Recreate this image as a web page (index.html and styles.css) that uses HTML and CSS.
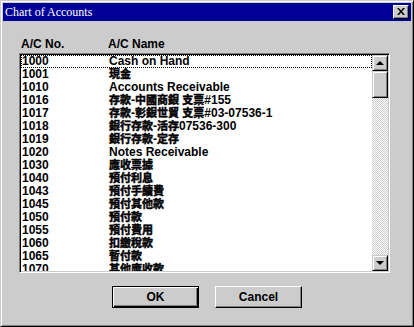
FILE: index.html
```html
<!DOCTYPE html>
<html lang="en">
<head>
  <meta charset="UTF-8" />
  <title>Chart of Accounts</title>
  <link rel="stylesheet" href="styles.css">
</head>
<body>
  <div class="window">
    <div class="titlebar">
      <span class="title">Chart of Accounts</span>
      <button class="close-btn" title="Close">
        <svg width="8" height="7" viewBox="0 0 8 7"><path d="M0 0h2l2 2.5 2-2.5h2l-3 3.5 3 3.5h-2l-2-2.5-2 2.5h-2l3-3.5z" fill="#000"/></svg>
      </button>
    </div>

    <div class="content">
      <div class="col-head">
        <span class="col-no">A/C No.</span>
        <span class="col-name">A/C Name</span>
      </div>

      <div class="listbox">
        <div class="rows" id="rows"></div>
        <div class="scrollbar">
          <div class="sb-btn"><span class="arrow up"></span></div>
          <div class="sb-thumb"></div>
          <div class="sb-track"></div>
          <div class="sb-btn"><span class="arrow down"></span></div>
        </div>
      </div>

      <div class="buttons">
        <button class="btn default">OK</button>
        <button class="btn">Cancel</button>
      </div>
    </div>
  </div>

  <script>
    const accounts = [
      ["1000", "Cash on Hand"],
      ["1001", "現金"],
      ["1010", "Accounts Receivable"],
      ["1016", "存款-中國商銀 支票#155"],
      ["1017", "存款-彰銀世貿 支票#03-07536-1"],
      ["1018", "銀行存款-活存07536-300"],
      ["1019", "銀行存款-定存"],
      ["1020", "Notes Receivable"],
      ["1030", "應收票據"],
      ["1040", "預付利息"],
      ["1043", "預付手續費"],
      ["1045", "預付其他款"],
      ["1050", "預付款"],
      ["1055", "預付費用"],
      ["1060", "扣繳稅款"],
      ["1065", "暫付款"],
      ["1070", "其他應收款"]
    ];

    const rows = document.getElementById("rows");

    // chinese runs get their own span so they can be drawn heavier
    function fillName(el, text) {
      const parts = text.split(/([\u3400-\u9fff]+)/);
      for (const p of parts) {
        if (!p) continue;
        if (/[\u3400-\u9fff]/.test(p)) {
          const s = document.createElement("span");
          s.className = "cjk";
          s.textContent = p;
          el.appendChild(s);
        } else {
          el.appendChild(document.createTextNode(p));
        }
      }
    }

    accounts.forEach(([no, name], i) => {
      const row = document.createElement("div");
      row.className = i === 0 ? "row focus" : "row";
      const a = document.createElement("span");
      a.className = "no";
      a.textContent = no;
      const b = document.createElement("span");
      b.className = "name";
      fillName(b, name);
      row.appendChild(a);
      row.appendChild(b);
      rows.appendChild(row);
    });
  </script>
</body>
</html>
```

FILE: styles.css
```css
* {
  box-sizing: border-box;
  margin: 0;
  padding: 0;
}

body {
  width: 414px;
  height: 327px;
  overflow: hidden;
  background: #cccccc;
  font-family: "Liberation Sans", Arial, "Noto Sans CJK TC", sans-serif;
  font-size: 12px;
  font-weight: bold;
  color: #000;
}

.window {
  width: 414px;
  height: 327px;
  background: #cccccc;
  border-top: 1px solid #cccccc;
  border-left: 1px solid #cccccc;
  border-right: 1px solid #000;
  border-bottom: 1px solid #000;
  box-shadow: inset 1px 1px 0 #fff, inset -1px -1px 0 #808080;
  padding: 2px;
  display: flex;
  flex-direction: column;
}

.titlebar {
  height: 18px;
  background: #000099;
  display: flex;
  align-items: center;
  justify-content: space-between;
  padding: 0 2px 0 2px;
}

.title {
  font-family: "Liberation Serif", "Times New Roman", serif;
  font-weight: normal;
  font-size: 12px;
  color: #fff;
  line-height: 18px;
}

.close-btn {
  width: 16px;
  height: 14px;
  background: #cccccc;
  border-top: 1px solid #fff;
  border-left: 1px solid #fff;
  border-right: 1px solid #000;
  border-bottom: 1px solid #000;
  box-shadow: inset -1px -1px 0 #808080;
  display: flex;
  align-items: center;
  justify-content: center;
  padding: 0 1px 1px 0;
}

.content {
  flex: 1;
  padding: 16px 0 0 16px;
}

.col-head {
  display: flex;
  line-height: 14px;
  padding-left: 2px;
}

.col-no {
  width: 87px;
}

.listbox {
  margin-top: 2px;
  width: 371px;
  height: 220px;
  background: #fff;
  border-top: 1px solid #808080;
  border-left: 1px solid #808080;
  border-right: 1px solid #fff;
  border-bottom: 1px solid #fff;
  box-shadow: inset 1px 1px 0 #000, inset -1px -1px 0 #cccccc;
  padding: 1px 1px 1px 1px;
  display: flex;
}

.rows {
  flex: 1;
  overflow: hidden;
}

.row {
  display: flex;
  height: 13px;
  line-height: 13px;
  padding-left: 1px;
  white-space: nowrap;
}

.row.focus {
  outline: 1px dotted #000;
  outline-offset: -1px;
}

.row .no {
  width: 87px;
  flex: none;
}

.name {
  height: 13px;
}

.cjk {
  font-family: "Noto Sans CJK TC", sans-serif;
  font-size: 11px;
  line-height: 0;
  -webkit-text-stroke: 0.45px #000;
}

.scrollbar {
  width: 16px;
  display: flex;
  flex-direction: column;
}

.sb-btn,
.sb-thumb {
  background: #cccccc;
  border-top: 1px solid #cccccc;
  border-left: 1px solid #cccccc;
  border-right: 1px solid #000;
  border-bottom: 1px solid #000;
  box-shadow: inset 1px 1px 0 #fff, inset -1px -1px 0 #808080;
}

.sb-btn {
  height: 16px;
  display: flex;
  align-items: center;
  justify-content: center;
}

.sb-thumb {
  height: 27px;
}

.sb-track {
  flex: 1;
  background: repeating-conic-gradient(#fff 0 25%, #cccccc 0 50%) 0 0 / 2px 2px;
}

.arrow {
  width: 0;
  height: 0;
  border-left: 4px solid transparent;
  border-right: 4px solid transparent;
}

.arrow.up {
  border-bottom: 4px solid #000;
}

.arrow.down {
  border-top: 4px solid #000;
}

.buttons {
  display: flex;
  justify-content: center;
  gap: 16px;
  margin-top: 13px;
  margin-left: -16px;
}

.btn {
  width: 87px;
  height: 22px;
  background: #cccccc;
  font-family: "Liberation Sans", Arial, sans-serif;
  font-weight: bold;
  font-size: 12px;
  border-top: 1px solid #fff;
  border-left: 1px solid #fff;
  border-right: 1px solid #000;
  border-bottom: 1px solid #000;
  box-shadow: inset -1px -1px 0 #808080;
}

.btn.default {
  border: 1px solid #000;
  box-shadow: inset 1px 1px 0 #fff, inset -1px -1px 0 #000, inset -2px -2px 0 #808080;
}
```
